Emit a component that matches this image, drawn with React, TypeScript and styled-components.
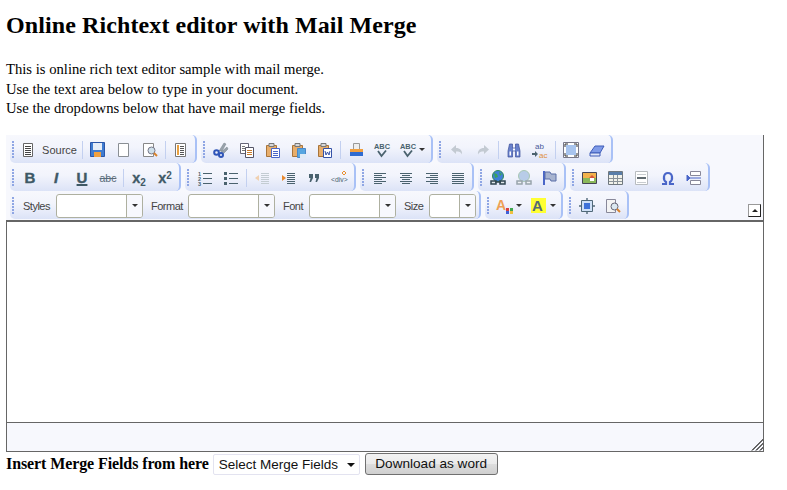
import React from 'react'
import styled, { createGlobalStyle } from 'styled-components'

const GlobalStyle = createGlobalStyle`
  html, body {
    margin: 0;
    padding: 0;
    background: #fff;
    color: #000;
    font-family: 'Liberation Serif', 'Times New Roman', serif;
  }
`

const Page = styled.div`
  width: 787px;
  height: 490px;
  padding: 12px 6px 0;
  box-sizing: border-box;
  overflow: hidden;
`

const Title = styled.h1`
  margin: 0 0 21px;
  font-size: 24px;
  line-height: 27px;
  font-weight: bold;
  letter-spacing: 0.1px;
`

const Intro = styled.p`
  margin: 0 0 16px;
  font-size: 14.67px;
  line-height: 19.5px;
`

const Editor = styled.div`
  width: 758px;
  height: 317px;
  display: flex;
  flex-direction: column;
  box-sizing: border-box;
`

const Toolbar = styled.div`
  position: relative;
  height: 85px;
  flex: none;
  background: #f7f8fd;
  border-right: 1px solid #666;
`

const Row = styled.div`
  display: flex;
  height: 28px;
  padding-left: 4px;
`

const Group = styled.div`
  display: flex;
  align-items: center;
  height: 28px;
  box-sizing: border-box;
  margin-right: 4px;
  padding: 2px 1px 0 0;
  border-right: 2px solid #a9c1f6;
  border-radius: 0 5px 5px 5px;
  background: linear-gradient(#f7f8fd 0%, #f2f4fc 45%, #dce3f7 100%);
`

const Grip = styled.span`
  width: 7px;
  height: 17px;
  flex: none;
  background: repeating-linear-gradient(#8fa6e4 0 2px, transparent 2px 3px) 2px 0 / 2px 100% no-repeat;
`

const Sep = styled.span`
  width: 1px;
  height: 18px;
  margin: 0 2px;
  flex: none;
  background: #c3d0f0;
`

const ToolButton = styled.span<{ $w?: number }>`
  width: ${(p) => p.$w ?? 26}px;
  height: 22px;
  flex: none;
  display: flex;
  align-items: center;
  justify-content: center;
  color: #3f5966;
  font-family: 'Liberation Sans', Arial, sans-serif;
`

const SourceText = styled.span`
  margin-left: 6px;
  font-size: 11px;
  color: #444;
`

const LetterIcon = styled.span<{ $italic?: boolean; $under?: boolean }>`
  font-size: 15px;
  font-weight: bold;
  font-family: 'Liberation Sans', Arial, sans-serif;
  font-style: ${(p) => (p.$italic ? 'italic' : 'normal')};
  text-decoration: ${(p) => (p.$under ? 'underline' : 'none')};
  text-decoration-thickness: 2px;
  -webkit-text-stroke: 0.4px #3f5966;
  color: #3f5966;
`

const StrikeIcon = styled.span`
  font-size: 10.5px;
  text-decoration: line-through;
  color: #5a6c7a;
`

const ScriptIcon = styled.span`
  font-size: 14.5px;
  font-weight: bold;
  -webkit-text-stroke: 0.3px #3f5966;
  color: #3f5966;

  sub, sup {
    font-size: 10px;
    line-height: 0;
    -webkit-text-stroke: 0;
  }

  sub {
    vertical-align: -3px;
  }

  sup {
    vertical-align: 4px;
  }
`

const Caret = styled.span`
  width: 0;
  height: 0;
  margin-left: 3px;
  border: 3px solid transparent;
  border-top: 3px solid #333;
  border-bottom: 0;
`

const ComboLabel = styled.span<{ $w: number }>`
  width: ${(p) => p.$w}px;
  flex: none;
  box-sizing: border-box;
  padding-left: 6px;
  font: 11px 'Liberation Sans', Arial, sans-serif;
  letter-spacing: -0.5px;
  color: #444;
`

const Combo = styled.span<{ $w: number }>`
  width: ${(p) => p.$w}px;
  height: 24px;
  margin: 0 2px 0 0;
  flex: none;
  display: flex;
  justify-content: flex-end;
  box-sizing: border-box;
  border: 1px solid #aeb0a0;
  border-radius: 3px;
  background: #fff;
`

const ComboArrow = styled.span`
  width: 15px;
  display: flex;
  align-items: center;
  justify-content: center;
  border-left: 1px solid #aeb0a0;
  background: #f7f8fd;
  border-radius: 0 2px 2px 0;

  ${Caret} {
    margin: 0;
  }
`

const Collapser = styled.span`
  position: absolute;
  right: 2px;
  bottom: 3px;
  width: 11px;
  height: 11px;
  display: flex;
  align-items: center;
  justify-content: center;
  background: #fff;
  border: 1px solid #999;
  border-right-color: #222;
  border-bottom-color: #222;

  &::after {
    content: '';
    border: 3px solid transparent;
    border-bottom: 3px solid #222;
    border-top: 0;
  }
`

const Body = styled.textarea`
  display: block;
  flex: 1;
  min-height: 0;
  margin: 0;
  padding: 0;
  resize: none;
  outline: none;
  box-sizing: border-box;
  background: #fff;
  border: 1px solid #666;
  border-width: 2px 1px 1px;
`

const Foot = styled.div`
  position: relative;
  height: 29px;
  flex: none;
  box-sizing: border-box;
  background: #f7f8fd;
  border: 1px solid #666;
  border-top: 0;
`

const Resizer = styled.span`
  position: absolute;
  right: 0;
  bottom: 0;
  width: 13px;
  height: 13px;
  background: repeating-linear-gradient(135deg, transparent 0 1.4px, #666 1.4px 2.8px);
  clip-path: polygon(100% 0, 100% 100%, 0 100%);
`

const MergeBar = styled.div`
  display: flex;
  align-items: flex-start;
  height: 24px;
`

const MergeLabel = styled.b`
  font-size: 16px;
  line-height: 24px;
  letter-spacing: -0.1px;
  margin-right: 4px;
`

const SelectWrap = styled.span`
  position: relative;
  margin-top: 2px;

  &::after {
    content: '';
    position: absolute;
    right: 5px;
    top: 9px;
    border: 4px solid transparent;
    border-top: 4px solid #111;
    border-bottom: 0;
    pointer-events: none;
  }
`

const MergeSelect = styled.select`
  display: block;
  width: 147px;
  height: 21px;
  padding: 0 0 0 5px;
  appearance: none;
  background: #fff;
  border: 1px solid #e3e3f0;
  border-radius: 2px;
  color: #111;
  font: 13.5px 'Liberation Sans', Arial, sans-serif;
`

const DownloadButton = styled.button`
  width: 133px;
  height: 22px;
  margin: 1px 0 0 5px;
  padding: 0;
  border: 1px solid #707070;
  border-radius: 3px;
  background: linear-gradient(#f2f2f2 0%, #ebebeb 48%, #dddddd 52%, #cfcfcf 100%);
  color: #111;
  font: 13.6px 'Liberation Sans', Arial, sans-serif;
`

const IconSvg = styled.svg`
  flex: none;
  overflow: visible;
`

const Svg = ({ children }: { children: React.ReactNode }) => (
  <IconSvg width="16" height="16" viewBox="0 0 16 16" fill="none">
    {children}
  </IconSvg>
)

const lines = (x1: number, x2: number, ys: number[], color: string) =>
  ys.map((y) => <path key={y} d={`M${x1} ${y + 0.5}H${x2}`} stroke={color} />)

const slate = '#4a626e'
const blue = '#4a66c8'

const Paste = ({ inner }: { inner: React.ReactNode }) => (
  <Svg>
    <path d="M1.5 3.5h10v11h-10z" fill="#e8ae6c" stroke="#a8743a" />
    <path d="M4 1.5h5v3H4z" fill="#d8d8d8" stroke="#777" />
    {inner}
  </Svg>
)

const Spell = () => (
  <Svg>
    <text x="0" y="7" fontFamily="Liberation Sans" fontWeight="bold" fontSize="8" textLength="16" lengthAdjust="spacingAndGlyphs" fill={slate}>
      ABC
    </text>
    <path d="M4 9l3.5 5L12 8.5" stroke={slate} strokeWidth="1.8" />
  </Svg>
)

const icons: Record<string, React.ReactNode> = {
  source: (
    <Svg>
      <path d="M3.5 1.5h9v13h-9z" fill="#fff" stroke="#666" />
      {lines(5, 11, [4, 6, 8, 10, 12], '#444')}
    </Svg>
  ),
  save: (
    <Svg>
      <path d="M.5.5h14v14H.5z" fill="#3f7cd0" stroke="#2a55a8" />
      <path d="M3 1h9v7H3z" fill="#e6edf8" />
      <path d="M4 10h7v5H4z" fill="#f0a040" />
    </Svg>
  ),
  newpage: (
    <Svg>
      <path d="M2.5 1.5h10v13h-10z" fill="#fff" stroke="#8a8f94" />
    </Svg>
  ),
  preview: (
    <Svg>
      <path d="M1.5 1.5h10v13h-10z" fill="#fff" stroke="#888" />
      <circle cx="9.5" cy="8.5" r="3.5" fill="#cfe0ea" stroke="#778" />
      <path d="M12 11l3 3" stroke="#d9822b" strokeWidth="2" />
    </Svg>
  ),
  templates: (
    <Svg>
      <path d="M2.5 1.5h10v13h-10z" fill="#fff" stroke="#777" />
      <path d="M4 3h2v10H4z" fill="#e8a040" />
      {lines(7, 11, [4, 6, 8, 10, 12], '#555')}
    </Svg>
  ),
  cut: (
    <Svg>
      <path d="M6 9l5-8 2 1-4 7zM8 10l6-5 1 2-5 5z" fill="#98a2aa" stroke="#77828a" strokeWidth=".5" />
      <circle cx="3.5" cy="10.5" r="2.3" stroke="#2f55b8" strokeWidth="2" />
      <circle cx="8" cy="13" r="2" stroke="#2f55b8" strokeWidth="2" />
    </Svg>
  ),
  copy: (
    <Svg>
      <path d="M1.5 1.5h8v10h-8z" fill="#fff" stroke="#667" />
      <path d="M6.5 5.5h8v10h-8z" fill="#fff" stroke="#556" />
      {lines(3, 6, [4, 6, 8], '#777')}
      {lines(8, 13, [8, 10, 12], '#c77a2a')}
    </Svg>
  ),
  paste: (
    <Paste
      inner={
        <>
          <path d="M6.5 6.5h8v9h-8z" fill="#fff" stroke="#4a66c8" />
          {lines(8, 13, [9, 11, 13], blue)}
        </>
      }
    />
  ),
  pastetext: (
    <Paste
      inner={
        <>
          <path d="M6.5 6.5h8v9h-8z" fill="#58a6e0" stroke="#4a88c8" />
          <path d="M9 12h6v4H9z" fill="#dfeaf5" />
        </>
      }
    />
  ),
  pasteword: (
    <Paste
      inner={
        <>
          <path d="M6.5 6.5h8v9h-8z" fill="#fff" stroke="#3552a8" />
          <path d="M8 9l1 4 1.5-3 1.5 3 1-4" stroke="#3552a8" />
        </>
      }
    />
  ),
  print: (
    <Svg>
      <path d="M5.5 1.5h6v6h-6z" fill="#eee" stroke="#999" />
      <path d="M2 7h13v3H2z" fill="#f0a040" />
      <path d="M2 10h13v4H2z" fill="#2f6bd0" />
    </Svg>
  ),
  spell: <Spell />,
  undo: (
    <Svg>
      <path d="M7 3L2 7.5 7 12V9.500c3 0 5 .5 6 3 .5-4-2-6.500-6-6.500z" fill="#c3cad2" />
    </Svg>
  ),
  redo: (
    <Svg>
      <path d="M9 3l5 4.500L9 12V9.500c-3 0-5 .5-6 3-.5-4 2-6.500 6-6.500z" fill="#c3cad2" />
    </Svg>
  ),
  find: (
    <Svg>
      <path d="M3.500 2h3v4h3V2h3l1.500 7v6h-4.500V9h-3v6H2V9z" fill="#6a82cc" stroke="#3d5099" strokeWidth=".7" />
      <path d="M3.500 9.500h1.500v4H3.500zM11 9.500h1.500v4H11zM7 6.500h2v2H7z" fill="#fff" />
    </Svg>
  ),
  replace: (
    <Svg>
      <text x="3" y="6.500" fontFamily="Liberation Sans" fontSize="8" fill="#4a5a9a">
        ab
      </text>
      <path d="M0 11h3V9l3 3-3 3v-2H0z" fill={slate} />
      <text x="7" y="15.500" fontFamily="Liberation Sans" fontSize="8" fill="#e09040">
        ac
      </text>
    </Svg>
  ),
  maximize: (
    <Svg>
      <path d="M.5.5h15v15H.5z" fill="#fff" stroke="#778" />
      <path d="M3 3h10v10H3z" fill="#a8c4ee" />
      <path d="M2 5V2h3M11 2h3v3M14 11v3h-3M5 14H2v-3" stroke="#333" />
    </Svg>
  ),
  eraser: (
    <Svg>
      <path d="M1 11l5-7h9l-4 7z" fill="#7f9be8" stroke="#3f5cb8" />
      <path d="M1 11h10v3H1z" fill="#dfe6f8" stroke="#3f5cb8" />
    </Svg>
  ),
  ol: (
    <Svg>
      <text x="1" y="6" fontFamily="Liberation Sans" fontSize="5.500" fontWeight="bold" fill={slate}>1</text>
      <text x="1" y="11" fontFamily="Liberation Sans" fontSize="5.500" fontWeight="bold" fill={slate}>2</text>
      <text x="1" y="16" fontFamily="Liberation Sans" fontSize="5.500" fontWeight="bold" fill={slate}>3</text>
      {lines(6, 15, [3, 8, 13], slate)}
    </Svg>
  ),
  ul: (
    <Svg>
      <path d="M1 2h3v3H1zM1 7h3v3H1zM1 12h3v3H1z" fill={slate} />
      {lines(6, 15, [3, 8, 13], slate)}
    </Svg>
  ),
  outdent: (
    <Svg>
      {lines(7, 15, [3, 5, 7, 9, 11, 13], '#c3ccd2')}
      <path d="M1 8l4-3v6z" fill="#f0d0b0" />
    </Svg>
  ),
  indent: (
    <Svg>
      {lines(7, 15, [3, 5, 7, 9, 11, 13], slate)}
      <path d="M6 8L2 5v6z" fill="#e88a30" />
    </Svg>
  ),
  quote: (
    <Svg>
      <path d="M3 4h4v4l-2 4H3.500L4.500 8H3zM9 4h4v4l-2 4H9.500L10.500 8H9z" fill={slate} />
    </Svg>
  ),
  div: (
    <Svg>
      <text x="-1" y="12" fontFamily="Liberation Sans" fontSize="6.800" fill={slate}>
        {'<div>'}
      </text>
      <path d="M12 1l2 2-2 2-2-2z" stroke="#e89030" />
    </Svg>
  ),
  alignleft: <Svg>{[3, 5, 7, 9, 11, 13].map((y, i) => <path key={y} d={`M2 ${y + 0.5}H${i % 2 ? 10 : 14}`} stroke={slate} />)}</Svg>,
  aligncenter: <Svg>{[3, 5, 7, 9, 11, 13].map((y, i) => <path key={y} d={i % 2 ? `M4 ${y + 0.5}H12` : `M2 ${y + 0.5}H14`} stroke={slate} />)}</Svg>,
  alignright: <Svg>{[3, 5, 7, 9, 11, 13].map((y, i) => <path key={y} d={`M${i % 2 ? 6 : 2} ${y + 0.5}H14`} stroke={slate} />)}</Svg>,
  justify: <Svg>{lines(2, 14, [3, 5, 7, 9, 11, 13], slate)}</Svg>,
  link: (
    <Svg>
      <circle cx="8" cy="6" r="5.500" fill="#3f7fd8" stroke="#2e8a56" />
      <path d="M4 3l3 1 1 3-3 1zM9 2l3 2-2 2z" fill="#3aa35c" />
      <path d="M1 11h5v3H1zM10 11h5v3h-5zM5 12h6" stroke="#2f4450" strokeWidth="1.500" fill="#dfe6ea" />
    </Svg>
  ),
  unlink: (
    <Svg>
      <circle cx="8" cy="6" r="5.500" fill="#b8cce8" stroke="#a8c8b4" />
      <path d="M1 11h5v3H1zM10 11h5v3h-5z" stroke="#98a4ac" strokeWidth="1.500" fill="#eef1f4" />
    </Svg>
  ),
  anchor: (
    <Svg>
      <path d="M2 1v14" stroke={blue} strokeWidth="2" />
      <path d="M3 2h5l1 2h5v7H9L8 9H3z" fill="#a8b4d0" stroke="#5a6ea8" />
    </Svg>
  ),
  image: (
    <Svg>
      <path d="M.5 2.500h14v11H.5z" fill="#8ab85a" stroke="#445" />
      <path d="M1 3h13v5H1z" fill="#f2b24c" />
      <path d="M8 7h4v4H8z" fill="#fff" />
      <path d="M7 8l3-3 3 3z" fill="#d8553a" />
    </Svg>
  ),
  table: (
    <Svg>
      <path d="M.5 1.500h14v13H.5z" fill="#f2f2ea" stroke="#70787e" />
      <path d="M1 2h13v3H1z" fill="#5a7ea8" />
      <path d="M1 8.500h13M1 11.500h13M5.500 5v9M9.500 5v9" stroke="#8a9298" />
    </Svg>
  ),
  hr: (
    <Svg>
      <path d="M1.500 1.500h12v13h-12z" fill="#fff" stroke="#b8bcc0" />
      <path d="M3 7h9v2H3z" fill="#606a70" />
      {lines(3, 12, [4, 12], '#c8ccd0')}
    </Svg>
  ),
  omega: (
    <Svg>
      <path d="M2 14h4v-2C3 10 3 3 8 3s5 7 2 9v2h4" stroke={blue} strokeWidth="2.200" />
    </Svg>
  ),
  pagebreak: (
    <Svg>
      <path d="M4.500 1.500h10v4h-10zM4.500 10.500h10v4h-10z" fill="#fff" stroke="#889" />
      <path d="M1 5l3 3-3 3zM4 8h11" stroke={blue} fill={blue} />
    </Svg>
  ),
  textcolor: (
    <Svg>
      <text x="-1" y="12" fontFamily="Liberation Sans" fontWeight="bold" fontSize="14" fill="#eea055">A</text>
      <path d="M9 10h3v3H9z" fill="#d84040" />
      <path d="M13 10h3v3h-3z" fill="#40a850" />
      <path d="M9 13h3v3H9z" fill="#4060d8" />
      <path d="M13 13h3v3h-3z" fill="#f0c040" />
    </Svg>
  ),
  bgcolor: (
    <Svg>
      <path d="M0 0h15v15H0z" fill="#ffff33" />
      <text x="1" y="13" fontFamily="Liberation Sans" fontWeight="bold" fontSize="15" fill="#566a76">A</text>
    </Svg>
  ),
  blocks: (
    <Svg>
      <path d="M2.500 2.500h11v11h-11z" fill="#cfe0f6" stroke="#506878" />
      <path d="M5 5h6v6H5z" fill="#3f72d8" />
      <path d="M8 0v2M8 14v2M0 8h2M14 8h2" stroke="#506878" strokeWidth="1.400" />
    </Svg>
  ),
  showsource: (
    <Svg>
      <path d="M1.500 1.500h9v13h-9z" fill="#f4f4f4" stroke="#889" />
      <circle cx="9.500" cy="8.500" r="3.500" fill="#dbe8f0" stroke="#667" />
      <path d="M12 11l3 3" stroke="#d9822b" strokeWidth="2" />
    </Svg>
  ),
}

const Tool = ({ name, w, caret }: { name: string; w?: number; caret?: boolean }) => (
  <ToolButton $w={w}>
    {icons[name]}
    {caret && <Caret />}
  </ToolButton>
)

const App = () => (
  <Page>
    <GlobalStyle />
    <Title>Online Richtext editor with Mail Merge</Title>
    <Intro>
      This is online rich text editor sample with mail merge.
      <br />
      Use the text area below to type in your document.
      <br />
      Use the dropdowns below that have mail merge fields.
    </Intro>

    <Editor>
      <Toolbar>
        <Row>
          <Group>
            <Grip />
            <ToolButton $w={63}>
              {icons.source}
              <SourceText>Source</SourceText>
            </ToolButton>
            <Sep />
            <Tool name="save" />
            <Tool name="newpage" />
            <Tool name="preview" />
            <Sep />
            <Tool name="templates" />
          </Group>
          <Group>
            <Grip />
            <Tool name="cut" />
            <Tool name="copy" />
            <Tool name="paste" />
            <Tool name="pastetext" />
            <Tool name="pasteword" />
            <Sep />
            <Tool name="print" />
            <Tool name="spell" />
            <Tool name="spell" w={35} caret />
          </Group>
          <Group>
            <Grip />
            <Tool name="undo" />
            <Tool name="redo" />
            <Sep />
            <Tool name="find" />
            <Tool name="replace" />
            <Sep />
            <Tool name="maximize" />
            <Tool name="eraser" />
          </Group>
        </Row>
        <Row>
          <Group>
            <Grip />
            <ToolButton><LetterIcon>B</LetterIcon></ToolButton>
            <ToolButton><LetterIcon $italic>I</LetterIcon></ToolButton>
            <ToolButton><LetterIcon $under>U</LetterIcon></ToolButton>
            <ToolButton><StrikeIcon>abc</StrikeIcon></ToolButton>
            <Sep />
            <ToolButton><ScriptIcon>x<sub>2</sub></ScriptIcon></ToolButton>
            <ToolButton><ScriptIcon>x<sup>2</sup></ScriptIcon></ToolButton>
          </Group>
          <Group>
            <Grip />
            <Tool name="ol" />
            <Tool name="ul" />
            <Sep />
            <Tool name="outdent" />
            <Tool name="indent" />
            <Tool name="quote" />
            <Tool name="div" />
          </Group>
          <Group>
            <Grip />
            <Tool name="alignleft" />
            <Tool name="aligncenter" />
            <Tool name="alignright" />
            <Tool name="justify" />
          </Group>
          <Group>
            <Grip />
            <Tool name="link" />
            <Tool name="unlink" />
            <Tool name="anchor" />
          </Group>
          <Group>
            <Grip />
            <Tool name="image" />
            <Tool name="table" />
            <Tool name="hr" />
            <Tool name="omega" />
            <Tool name="pagebreak" />
          </Group>
        </Row>
        <Row>
          <Group>
            <Grip />
            <ComboLabel $w={39}>Styles</ComboLabel>
            <Combo $w={87}><ComboArrow><Caret /></ComboArrow></Combo>
            <ComboLabel $w={43}>Format</ComboLabel>
            <Combo $w={87}><ComboArrow><Caret /></ComboArrow></Combo>
            <ComboLabel $w={32}>Font</ComboLabel>
            <Combo $w={87}><ComboArrow><Caret /></ComboArrow></Combo>
            <ComboLabel $w={31}>Size</ComboLabel>
            <Combo $w={47}><ComboArrow><Caret /></ComboArrow></Combo>
          </Group>
          <Group>
            <Grip />
            <Tool name="textcolor" w={34} caret />
            <Tool name="bgcolor" w={34} caret />
          </Group>
          <Group>
            <Grip />
            <Tool name="blocks" />
            <Tool name="showsource" />
          </Group>
        </Row>
        <Collapser />
      </Toolbar>
      <Body />
      <Foot>
        <Resizer />
      </Foot>
    </Editor>

    <MergeBar>
      <MergeLabel>Insert Merge Fields from here</MergeLabel>
      <SelectWrap>
        <MergeSelect defaultValue="">
          <option value="">Select Merge Fields</option>
        </MergeSelect>
      </SelectWrap>
      <DownloadButton>Download as word</DownloadButton>
    </MergeBar>
  </Page>
)

export default App
